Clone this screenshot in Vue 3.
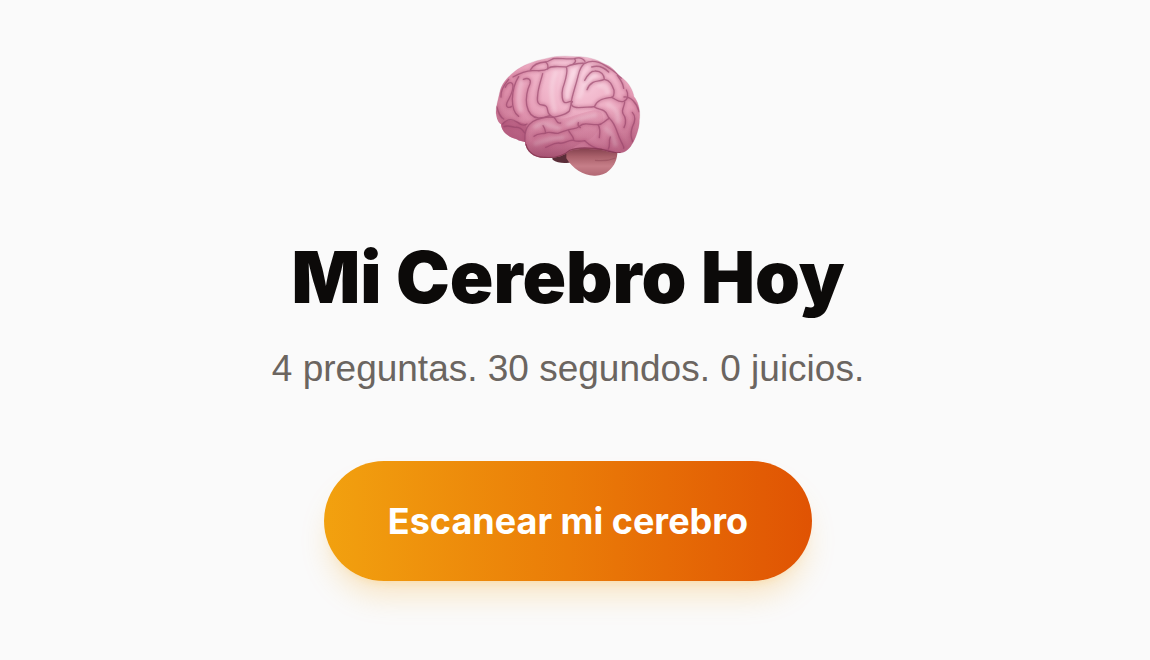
<script setup>
const title = 'Mi Cerebro Hoy'
const subtitle = '4 preguntas. 30 segundos. 0 juicios.'
const action = 'Escanear mi cerebro'

const folds = [
  'M84 98 C100 89 116 80 142 79 C160 78 176 83 190 72 C198 64 218 66 243 68 C260 60 277 56 299 57',
  'M136 77 C144 62 161 54 181 53 C190 53 195 47 205 43',
  'M181 53 C188 57 190 65 188 74',
  'M205 43 C224 41 244 45 268 43 C283 38 294 43 300 51',
  'M268 43 C275 49 271 54 264 60',
  'M299 57 C316 48 339 50 361 64 C381 76 397 87 409 101',
  'M320 68 C339 62 358 70 371 83',
  'M101 97 C91 112 83 140 82 165 C82 188 88 208 101 216',
  'M115 105 C130 99 139 105 135 118 C126 138 122 160 125 182 C130 207 141 219 160 221 C173 222 184 218 194 214',
  'M61 129 C68 112 84 110 84 126 C83 149 73 159 66 175 C61 188 70 193 80 186',
  'M71 105 C59 119 46 137 48 158',
  'M35 187 C41 207 45 218 56 224',
  'M173 88 C168 108 159 132 158 153 C155 174 160 182 172 182 C184 183 186 187 188 198 C189 209 195 214 206 219',
  'M245 70 C249 90 239 112 233 133 C229 151 232 171 238 174 C246 178 253 168 262 172',
  'M299 57 C281 70 282 90 275 111 C269 132 264 148 260 166 C255 185 264 190 281 190 C300 187 316 190 328 187',
  'M262 172 C256 178 258 188 253 200 C244 211 228 213 206 219',
  'M299 108 C306 95 316 80 329 80 C349 79 358 92 358 105 C346 111 336 108 324 114 C314 120 309 127 306 136',
  'M358 105 C376 108 381 122 387 138 C388 149 388 158 379 159 C357 163 338 164 328 187',
  'M379 159 C393 164 401 176 416 171 C429 166 432 151 424 137',
  'M397 93 C407 107 414 115 416 132',
  'M328 187 C337 196 350 193 359 201 C367 206 367 217 373 222',
  'M206 219 C190 216 180 219 169 222 C151 225 136 233 126 250 C119 264 118 282 121 300',
  'M206 219 C218 228 213 239 227 236',
  'M147 276 C160 265 171 270 182 266 C194 260 204 268 219 267 C235 262 248 255 267 253 C283 252 284 239 299 239 C315 238 324 242 339 241 C352 242 358 229 373 222',
  'M174 244 C181 253 181 263 182 266',
  'M280 235 C276 245 284 247 286 250',
  'M182 309 C195 305 205 295 222 296 C239 301 250 285 265 288 C279 293 287 291 299 289',
  'M251 259 C257 271 263 273 266 285',
  'M339 241 C346 251 345 267 343 280',
  'M373 222 C394 240 397 272 406 286 C411 299 418 306 416 312',
  'M376 278 C370 292 377 304 370 314',
  'M419 173 C419 187 408 195 414 208 C424 222 424 236 417 250',
  'M417 158 C437 156 455 176 462 202',
  'M442 204 C451 214 451 231 442 248 C437 263 437 279 443 292',
  'M53 239 C66 224 82 223 96 233 C106 242 118 244 126 239',
  'M57 247 C70 241 77 248 91 249 C104 247 114 258 119 266',
  'M299 289 C314 303 330 314 352 315 C371 317 383 323 391 325'
]
</script>

<template>
  <main class="screen">
    <svg class="brain" viewBox="30 32 438 366" aria-hidden="true">
      <defs>
        <radialGradient id="cortex" gradientUnits="userSpaceOnUse" cx="275" cy="88" r="265">
          <stop offset="0" stop-color="#fad2e1" />
          <stop offset=".42" stop-color="#f0b4c9" />
          <stop offset=".76" stop-color="#e295b0" />
          <stop offset="1" stop-color="#cd7b98" />
        </radialGradient>
        <linearGradient id="temporal" x1="0" y1="0" x2="0" y2="1">
          <stop offset="0" stop-color="#e399b3" />
          <stop offset=".65" stop-color="#d988a4" />
          <stop offset="1" stop-color="#a85a77" />
        </linearGradient>
        <linearGradient id="cerebellum" x1="0" y1="0" x2="0" y2="1">
          <stop offset="0" stop-color="#6f303e" />
          <stop offset=".4" stop-color="#a9606a" />
          <stop offset=".7" stop-color="#c67e88" />
          <stop offset="1" stop-color="#b26874" />
        </linearGradient>
        <linearGradient id="shade" x1="0" y1="0" x2="0" y2="1">
          <stop offset=".5" stop-color="#973e64" stop-opacity="0" />
          <stop offset="1" stop-color="#872c52" stop-opacity=".38" />
        </linearGradient>
        <filter id="soft" x="-20%" y="-20%" width="140%" height="140%">
          <feGaussianBlur stdDeviation="4" />
        </filter>
        <filter id="fine" x="-20%" y="-20%" width="140%" height="140%">
          <feGaussianBlur stdDeviation="2" />
        </filter>
        <clipPath id="outline">
          <path d="M33 207 C32 188 40 165 44 145 C49 119 67 99 88 82 C113 62 146 50 182 43 C208 35 238 34 270 37 C303 36 335 44 361 60 C386 69 393 88 412 101 C431 115 444 138 447 157 C462 175 467 204 463 228 C464 249 452 284 440 301 C431 318 414 327 398 326 C382 328 366 320 349 317 C313 314 279 311 254 320 C239 334 211 343 179 341 C146 341 122 321 120 293 C112 291 104 291 95 285 C71 279 49 263 48 240 C39 235 35 223 33 207 Z" />
        </clipPath>
      </defs>

      <path d="M199 330 L254 310 L263 352 C247 358 218 358 203 346 Z" fill="#5a2d38" />
      <path d="M244 334 C242 310 260 298 300 298 L397 320 C398 344 388 365 373 378 C361 390 344 395 327 394 C294 393 263 373 244 342 Z" fill="url(#cerebellum)" />
      <path d="M330 348 Q366 352 392 341" fill="none" stroke="#8f4855" stroke-opacity=".5" stroke-width="4" filter="url(#fine)" />

      <g clip-path="url(#outline)">
        <rect x="30" y="30" width="440" height="320" fill="url(#cortex)" />
        <path d="M48 239 C67 223 96 229 124 240 L122 300 C86 290 48 272 48 239" fill="#a84870" opacity=".4" />
        <path d="M126 246 C149 218 186 213 212 221 C242 229 278 207 319 199 C348 192 364 213 350 238 C338 263 323 285 299 292 C277 298 257 317 237 330 C200 350 120 340 119 289 C117 273 120 255 126 246" fill="url(#temporal)" opacity=".65" />
        <g filter="url(#soft)" fill="none" stroke="#fff" stroke-linecap="round" stroke-width="14" opacity=".22">
          <path d="M109 111 C102 139 98 174 107 198 M212 85 C196 116 197 152 209 197 M267 82 C250 115 246 138 247 158 M330 94 C308 99 299 119 284 158 M343 123 C361 124 367 134 367 145 M151 247 C177 231 200 247 220 252 M250 240 C275 225 310 215 330 213 M369 181 C397 192 400 211 399 231 M365 255 C375 262 384 280 391 300 M152 298 C176 289 205 281 232 280" />
        </g>
        <rect x="30" y="30" width="440" height="320" fill="url(#shade)" />
        <g class="fold-shadow" filter="url(#soft)">
          <path v-for="(fold, index) in folds" :key="index" :d="fold" />
        </g>
        <g class="fold-line" filter="url(#fine)">
          <path v-for="(fold, index) in folds" :key="index" :d="fold" />
        </g>
        <path d="M121 300 C128 330 155 342 179 341 C211 343 239 334 254 320 C281 308 318 312 350 317 C370 323 390 331 407 326" fill="none" stroke="#7c3049" stroke-width="7" opacity=".75" filter="url(#fine)" />
      </g>
      <path class="edge" d="M33 207 C32 188 40 165 44 145 C49 119 67 99 88 82 C113 62 146 50 182 43 C208 35 238 34 270 37 C303 36 335 44 361 60 C386 69 393 88 412 101 C431 115 444 138 447 157 C462 175 467 204 463 228 C464 249 452 284 440 301 C431 318 414 327 398 326" />
    </svg>
    <h1 class="title">{{ title }}</h1>
    <p class="subtitle">{{ subtitle }}</p>
    <button class="action" type="button">{{ action }}</button>
  </main>
</template>

<style>
body {
  margin: 0;
  background: #fafafa;
}
</style>

<style scoped>
.screen {
  display: flex;
  flex-direction: column;
  align-items: center;
  box-sizing: border-box;
  min-height: 100vh;
  padding: 55px 14px 48px 0;
  background: #fafafa;
  font-family: Inter, "Liberation Sans", sans-serif;
}
.brain {
  display: block;
  width: 146px;
  height: 122px;
}
.fold-shadow,
.fold-line,
.edge {
  fill: none;
  stroke-linecap: round;
  stroke-linejoin: round;
}
.fold-shadow {
  stroke: #a8486e;
  stroke-width: 10px;
  opacity: .36;
}
.fold-line {
  stroke: #96456a;
  stroke-width: 4px;
  opacity: .62;
}
.edge {
  stroke: #b86a8a;
  stroke-width: 2px;
  opacity: .3;
}
.title {
  margin: 60px 0 0;
  color: #0c0a09;
  font-size: 72px;
  font-weight: 900;
  line-height: 80px;
  text-align: center;
}
.subtitle {
  margin: 24px 0 0;
  color: #6b6560;
  font-family: "Liberation Sans", Arial, sans-serif;
  font-size: 37px;
  font-weight: 400;
  line-height: 56px;
  text-align: center;
}
.action {
  margin: 64px 0 0;
  padding: 32px 64px;
  border: 0;
  border-radius: 60px;
  background: linear-gradient(90deg, #f2a10f, #ea7c08 50%, #e05303);
  box-shadow:
    0 20px 30px -6px rgb(245 158 11 / 22%),
    0 8px 12px -8px rgb(245 158 11 / 22%);
  color: #fff;
  font: inherit;
  font-size: 36px;
  font-weight: 700;
  line-height: 56px;
  cursor: pointer;
}
</style>
